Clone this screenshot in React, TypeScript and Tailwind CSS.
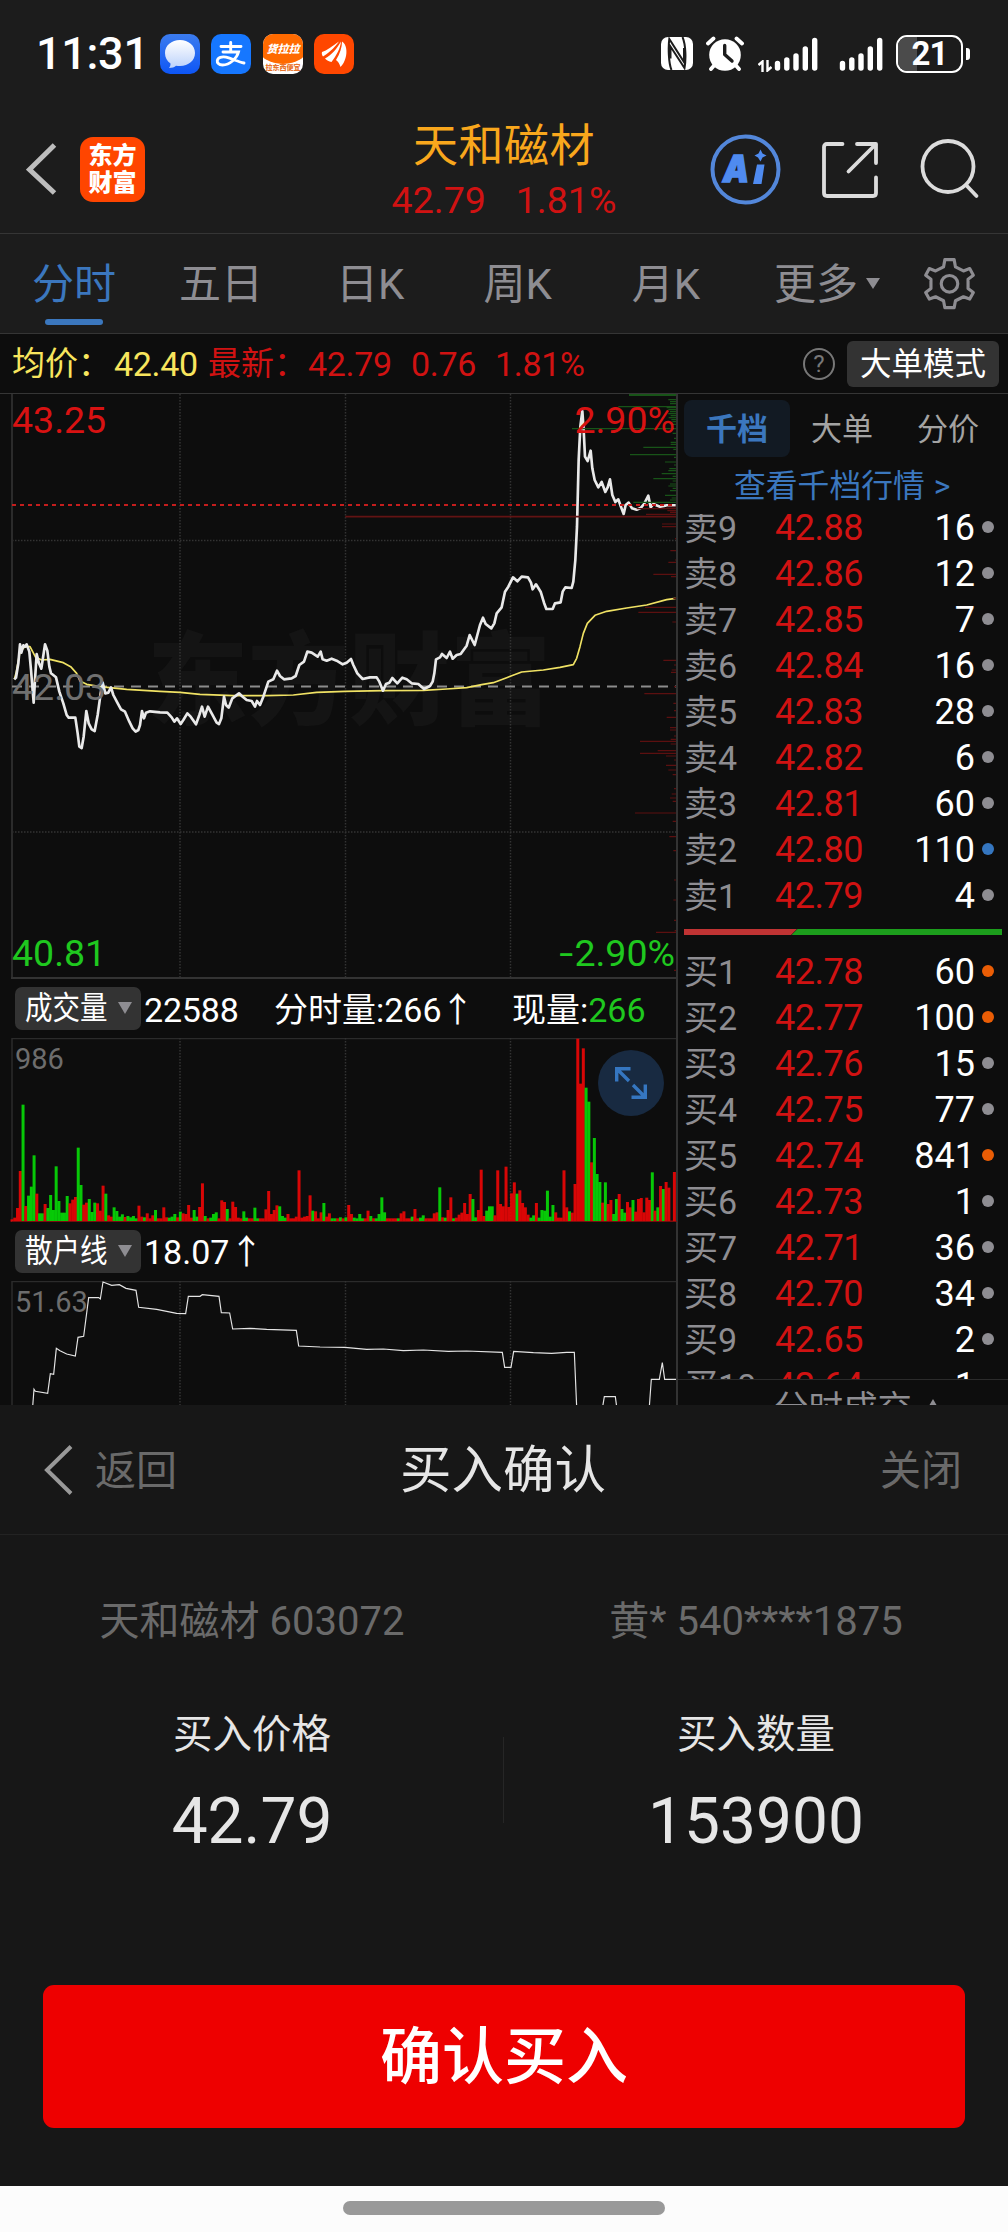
import React from "react";

type Dot = "gray" | "blue" | "orange";
type Quote = [label: string, price: string, qty: string, dot: Dot];

const asks: Quote[] = [
  ["卖9", "42.88", "16", "gray"],
  ["卖8", "42.86", "12", "gray"],
  ["卖7", "42.85", "7", "gray"],
  ["卖6", "42.84", "16", "gray"],
  ["卖5", "42.83", "28", "gray"],
  ["卖4", "42.82", "6", "gray"],
  ["卖3", "42.81", "60", "gray"],
  ["卖2", "42.80", "110", "blue"],
  ["卖1", "42.79", "4", "gray"],
];

const bids: Quote[] = [
  ["买1", "42.78", "60", "orange"],
  ["买2", "42.77", "100", "orange"],
  ["买3", "42.76", "15", "gray"],
  ["买4", "42.75", "77", "gray"],
  ["买5", "42.74", "841", "orange"],
  ["买6", "42.73", "1", "gray"],
  ["买7", "42.71", "36", "gray"],
  ["买8", "42.70", "34", "gray"],
  ["买9", "42.65", "2", "gray"],
  ["买10", "42.64", "1", "gray"],
];

const dotClass: Record<Dot, string> = {
  gray: "bg-[#8e8d92]",
  blue: "bg-[#3576c0]",
  orange: "bg-[#ea5d05]",
};

/* Chart series are kept at three units per pixel and scaled down when drawn. */
const PRICE =
  "43,898 48,893 55,850 60,793 64,818 70,796 75,800 80,793 88,815 93,870 101,968 105,900 110,822 117,850 124,866 128,840 135,793 142,812 148,860 153,880 168,892 178,935 190,970 200,1005 206,1013 226,1013 233,1060 238,1100 245,1104 251,1070 259,993 266,1030 275,1048 284,1053 293,1005 302,940 308,908 316,940 325,938 333,922 340,945 352,968 363,988 375,995 388,1025 398,1045 407,1055 415,1050 420,1035 426,993 432,1015 438,998 450,994 480,997 502,998 515,1012 523,1025 531,1015 542,1032 550,1020 562,1000 572,1010 588,1033 598,1005 606,980 614,1010 624,980 635,1000 650,1028 657,1032 664,1015 672,950 678,975 686,983 697,955 717,940 728,950 740,960 755,963 765,980 771,963 780,975 790,950 805,905 820,898 831,872 840,888 852,898 875,895 887,888 898,855 912,845 922,815 935,818 953,830 962,815 968,838 980,842 995,836 1010,842 1028,853 1040,848 1053,837 1060,855 1072,880 1088,897 1110,892 1130,892 1138,905 1149,932 1158,912 1168,908 1177,894 1192,910 1207,893 1220,898 1235,910 1255,912 1272,927 1290,918 1298,905 1303,880 1308,838 1320,832 1326,822 1340,834 1350,815 1358,836 1370,825 1382,822 1400,797 1409,765 1424,795 1432,765 1440,735 1449,713 1457,732 1474,745 1483,730 1490,700 1505,682 1515,635 1525,620 1539,592 1552,604 1565,590 1584,592 1593,608 1598,628 1608,613 1622,635 1632,668 1639,687 1658,687 1665,670 1682,667 1688,635 1696,622 1715,624 1720,605 1726,540 1731,440 1736,240 1741,140 1747,93 1751,150 1755,230 1763,243 1772,212 1777,265 1784,300 1795,322 1805,306 1816,336 1823,322 1830,298 1837,345 1846,366 1855,358 1862,378 1871,402 1877,375 1886,368 1896,385 1910,389 1923,383 1932,372 1945,347 1952,382 1960,372 1980,380 2000,376 2027,376";

const AVERAGE =
  "43,898 48,880 60,815 75,800 90,800 98,815 107,832 125,840 150,838 190,848 212,860 230,880 240,903 260,913 300,920 380,928 480,934 540,937 600,943 700,947 800,947 880,945 950,937 1035,934 1150,932 1270,931 1340,927 1400,923 1445,914 1480,908 1520,893 1565,876 1630,870 1680,862 1720,854 1730,835 1740,800 1750,760 1762,730 1785,706 1820,694 1880,684 1940,675 2000,659 2027,655";

const RETAIL =
  "98,1520 102,1468 106,1474 143,1480 151,1421 161,1423 169,1345 180,1352 200,1362 226,1368 234,1312 251,1309 266,1193 296,1193 301,1197 309,1146 335,1156 358,1154 378,1165 408,1171 416,1222 470,1228 530,1240 557,1241 565,1189 600,1189 607,1184 657,1189 664,1238 689,1239 698,1287 750,1285 800,1288 889,1291 896,1338 960,1341 1035,1342 1100,1348 1150,1347 1210,1352 1270,1350 1345,1354 1400,1353 1507,1357 1514,1402 1533,1402 1541,1354 1600,1358 1655,1360 1700,1357 1723,1357 1730,1520 1808,1520 1813,1490 1846,1490 1850,1520 1948,1520 1954,1438 1978,1438 1987,1388 1994,1438 2028,1438";

/* One token per minute: direction and the y of the bar's top. */
const VOLUME =
  "r958 r953 r924 r813 g614 r918 g887 g860 g766 r881 g940 g940 r912 g924 g885 g930 g799 g903 g938 g938 g888 r910 r899 r891 g743 g855 r914 r908 g897 g936 g908 r910 r932 r857 g881 r946 r950 g922 g933 g950 g943 r951 g948 g952 g948 g955 r917 r950 g952 r940 r955 r946 g930 r955 r955 r922 r952 g953 g950 g942 r952 g935 r940 r942 r915 r953 g930 g950 r921 r850 g948 r955 g953 g942 g937 r955 r901 r906 g927 r955 r905 r921 r953 r955 g934 g953 r955 r955 g923 g955 r955 r955 r928 r873 r942 r930 r916 g919 g948 g953 r942 r955 r955 r950 r811 r953 r950 r948 r886 g932 r934 r955 r937 g909 r950 r940 g955 g955 r955 g952 r955 g952 r915 r942 g953 g955 g942 g955 r955 r932 g948 r955 g955 g942 g892 g937 r955 r955 r955 r955 g955 r940 r934 r955 r955 g950 r927 r955 g953 g946 r955 r955 r955 r940 r937 g862 r952 g953 r930 r892 g955 r953 r944 r938 r909 r942 r882 g897 g952 r930 r809 r948 g932 g919 g919 r946 r811 r912 r919 r800 r921 r880 r847 g881 r871 r909 r922 r944 g953 g946 r909 g953 g930 g932 g872 g950 g915 r937 r953 r953 r811 r922 g934 r938 r852 r416 r551 r445 g563 g605 r787 g714 g822 g846 r908 g847 r912 r900 g942 g897 r882 g927 g938 r906 r922 g900 r935 r897 r894 r937 r893 r900 g817 r932 g922 r858 g867 r846 r863 r962 r816"
    .split(" ")
    .map((t) => ({ up: t[0] === "r", top: Number(t.slice(1)) }));

/* Pending-order depth at the right edge: [y, start x]. */
const DEPTH_ASK: [number, number][] = [
  [43, 1887], [46, 1887], [59, 2005], [65, 2010], [71, 2010], [80, 1855], [83, 2000], [89, 2005], [95, 2010], [101, 2005], [107, 2012], [113, 2006], [119, 2014], [125, 2017], [133, 2012], [146, 1716], [160, 2018], [175, 2022], [187, 2012], [193, 2012], [202, 1930], [208, 2020], [224, 1890], [232, 2022], [246, 1995], [255, 2022], [266, 2008], [272, 2005], [281, 1985], [289, 2018], [296, 1960], [303, 2018], [312, 2010], [318, 2005], [325, 2018], [332, 2010], [346, 1995], [354, 2015], [360, 2010], [367, 1900],
];
const DEPTH_BID: [number, number][] = [
  [381, 2000], [386, 1910], [392, 2002], [397, 2010], [403, 1938], [432, 1986], [440, 1986], [476, 2025], [512, 2011], [540, 2025], [547, 2005], [583, 1960], [590, 2013], [655, 2020], [682, 1935], [697, 1915], [726, 2017], [841, 1990], [855, 2022], [870, 2015], [877, 2013], [920, 2022], [941, 1933], [970, 2020], [992, 2022], [1012, 2000], [1043, 2010], [1050, 2010], [1068, 2022], [1078, 2012], [1084, 1920], [1092, 2012], [1112, 1973], [1120, 1920], [1128, 1998], [1140, 2022], [1156, 1998], [1170, 2005], [1184, 2018], [1226, 2022], [1242, 2015], [1254, 2010], [1264, 2018], [1299, 1905], [1324, 2018], [1370, 2008], [1412, 2020], [1500, 2022], [1560, 2020], [1621, 2022], [1652, 2024], [1657, 1968], [1771, 2022],
];

function Grid({ height }: { height: number }) {
  return (
    <g stroke="#333" strokeWidth="1.5" strokeDasharray="1.5 1.5">
      {[180, 345.5, 510.5].map((x) => (
        <line key={x} x1={x} x2={x} y1="0" y2={height} />
      ))}
    </g>
  );
}

function Signal() {
  return (
    <svg width="45" height="36" viewBox="0 0 45 36" stroke="#fff" strokeWidth="5.4" strokeLinecap="round">
      <path d="M3.5 27.5V32M12.8 24V32M22 20V32M31.3 13V32M40.7 4.5V32" />
    </svg>
  );
}

function StatusBar() {
  return (
    <div className="flex h-[107px] items-center pl-[36px] pr-[38px] text-white">
      <span className="w-[124px] whitespace-nowrap text-[45px] font-medium leading-none tracking-[-0.3px]">11:31</span>
      <div className="flex h-[40px] w-[40px] items-center justify-center rounded-[10px] bg-gradient-to-b from-[#3b7bee] to-[#0d55f5]">
        <svg width="40" height="40" viewBox="0 0 40 40">
          <defs>
            <linearGradient id="bubble" x1="0" y1="0" x2="0" y2="1">
              <stop offset="0" stopColor="#fff" />
              <stop offset="1" stopColor="#bcd2fb" />
            </linearGradient>
          </defs>
          <path d="M20 6C11.500 6 5 11.500 5 19C5 23.500 7 27 10.500 29.500C10.500 31.500 10 32.800 9 34C12 34 14.500 33 16 31.700C17.300 32 18.700 32 20 32C28.500 32 35 26.500 35 19C35 11.500 28.500 6 20 6Z" fill="url(#bubble)" />
        </svg>
      </div>
      <div className="ml-[11px] h-[40px] w-[40px] rounded-[10px] bg-[#1677ff]">
        <svg width="40" height="40" viewBox="0 0 40 40" fill="none" stroke="#fff" strokeWidth="2.900" strokeLinecap="round">
          <path d="M10 12.500H30M19.700 8.500V18M12 18H27.500C26 24 19 31 11.500 31C7.500 31 6 28.600 6.300 26.600C6.800 23.500 11 22.300 15 23.200C21 24.600 27 27.800 33 29" />
        </svg>
      </div>
      <div className="ml-[12px] flex h-[40px] w-[40px] flex-col items-center overflow-hidden rounded-[10px] bg-white">
        <div className="flex h-[30px] w-[48px] shrink-0 items-center justify-center rounded-b-[50%] bg-[#ff6a00] text-[11px] font-black italic leading-none">
          <span className="pt-[2px]">货拉拉</span>
        </div>
        <span className="whitespace-nowrap text-[7px] font-black leading-[8px] text-[#e8732a]">拉东西便宜</span>
      </div>
      <div className="ml-[11px] h-[40px] w-[40px] rounded-[10px] bg-[#ff4700]">
        <svg width="40" height="40" viewBox="0 0 40 40" fill="#fff">
          <path d="M8 18C13 16.500 18 12.500 25 7.500C21.500 12 17.500 17 9 22.500C8 21 7.500 19.500 8 18Z" />
          <path d="M11 24.500C18 20.500 23 14.500 27 7.500C26.500 14 22.500 21.500 17.500 28C15 27.500 12.500 26.500 11 24.500Z" />
          <path d="M22 26C26 19.500 28 13.500 28 7.500C32.500 10 33.500 18 31.500 24C30.500 27.500 29 30.500 26.500 33C25.500 29.500 24 27.500 22 26Z" />
        </svg>
      </div>
      <div className="ml-auto flex items-center">
        <svg width="32" height="33" viewBox="0 0 32 33">
          <rect width="32" height="33" rx="7" fill="#fff" />
          <path d="M10.500 33C7.500 26 7.200 10 8.300 2L23 25V11M21.500 0C25 8 25 23 23.500 31L9.500 9.500V21.500" stroke="#1c1c1c" strokeWidth="2" fill="none" />
        </svg>
        <svg className="ml-[13px]" width="38" height="35" viewBox="0 0 38 35">
          <circle cx="19" cy="19" r="15.800" fill="#fff" />
          <path d="M2 7.500L7.500 2.500M36 7.500L30.500 2.500M5 33L8.500 29M33 33L29.500 29" stroke="#fff" strokeWidth="3.800" strokeLinecap="round" />
          <path d="M18.700 9.500V18.500L26 25" stroke="#1c1c1c" strokeWidth="3.400" fill="none" strokeLinecap="round" strokeLinejoin="round" />
        </svg>
        <svg className="ml-[14px] mt-[24px]" width="14" height="12" viewBox="0 0 14 12" fill="none" stroke="#fff" strokeWidth="2.400">
          <path d="M0.500 5L4.500 1.500V12M13.500 7L9.500 10.500V0" />
        </svg>
        <div className="ml-[2px]"><Signal /></div>
        <div className="ml-[20px]"><Signal /></div>
        <div className="relative ml-[12px] flex h-[38px] w-[67px] items-center justify-center overflow-hidden rounded-[11px] border-2 border-white">
          <div className="absolute inset-y-0 left-0 w-[19px] bg-[#4b4b4b]" />
          <span className="relative text-[33px] font-bold leading-none tracking-[-1px]">21</span>
        </div>
        <div className="ml-[3px] h-[12px] w-[4px] rounded-r-[3px] bg-white" />
      </div>
    </div>
  );
}

function Header() {
  return (
    <header className="flex h-[127px] items-start border-b border-[#353535] pl-[26px] pr-[28px]">
      <svg className="mt-[36px]" width="32" height="52" viewBox="0 0 32 52" fill="none" stroke="#bdbdbd" strokeWidth="5">
        <path d="M28.500 2L3.500 26.500L28.500 50" />
      </svg>
      <div className="ml-[22px] mt-[30px] flex h-[65px] w-[65px] flex-col items-center justify-center rounded-[13px] bg-[#ff4500] text-[24px] font-black leading-[27px] text-white">
        <span>东方</span>
        <span>财富</span>
      </div>
      <div className="ml-[245px] flex w-[228px] flex-col items-center">
        <span className="mt-[17px] text-[45px] leading-none tracking-[0.500px] text-[#f9a71c]">天和磁材</span>
        <span className="mt-[13px] flex gap-[30px] text-[37.500px] leading-none text-[#d01212]">
          <span>42.79</span>
          <span>1.81%</span>
        </span>
      </div>
      <svg className="ml-[92px] mt-[27px]" width="71" height="71" viewBox="0 0 71 71">
        <circle cx="35.500" cy="35.500" r="33" fill="none" stroke="#5387da" strokeWidth="4" />
        <text x="13" y="48" fill="#4f8bf0" stroke="#4f8bf0" strokeWidth="1.500" fontFamily="Inter, sans-serif" fontSize="37" fontWeight="900" fontStyle="italic" textLength="26" lengthAdjust="spacingAndGlyphs">A</text>
        <path d="M47 30.500H54.500L51.500 50H43ZM50.500 15.500L52.500 19.500L56.500 21.500L52.500 23.500L50.500 27.500L48 23.500L44.500 21.500L48.500 19.500Z" fill="#4f8bf0" />
      </svg>
      <svg className="ml-[40px] mt-[34px]" width="58" height="58" viewBox="0 0 58 58" fill="none" stroke="#dcdcdc" strokeWidth="3.800" strokeLinecap="round" strokeLinejoin="round">
        <path d="M21.500 3H6Q3 3 3 6V52Q3 55 6 55H52Q55 55 55 52V36.500M36 3H55V22M54 4L27.500 30.500" />
      </svg>
      <svg className="ml-[41px] mt-[32px]" width="60" height="60" viewBox="0 0 60 60" fill="none" stroke="#dcdcdc" strokeWidth="3.800" strokeLinecap="round">
        <circle cx="28" cy="27.500" r="25.500" />
        <path d="M46 46L56.500 57" />
      </svg>
    </header>
  );
}

function Tabs() {
  return (
    <nav className="flex h-[100px] items-start border-b border-[#353535] pl-[32px] text-[42px] leading-none text-[#8e8d92]">
      <div className="flex w-[84px] flex-col items-center pt-[30px] text-[#3b77be]">
        <span>分时</span>
        <span className="mt-[13px] h-[6px] w-[58px] rounded-full bg-[#3b77be]" />
      </div>
      <span className="ml-[63px] mt-[30px]">五日</span>
      <span className="ml-[73px] mt-[30px]">日K</span>
      <span className="ml-[79px] mt-[30px]">周K</span>
      <span className="ml-[80px] mt-[30px]">月K</span>
      <span className="ml-[74px] mt-[30px]">更多</span>
      <svg className="ml-[8px] mt-[44px]" width="14" height="11" viewBox="0 0 14 11" fill="#8e8d92">
        <path d="M0 0H14L7 11Z" />
      </svg>
      <svg className="ml-[43px] mt-[23px]" width="53" height="53" viewBox="0 0 160 160" fill="none" stroke="#8e8d92" strokeWidth="9.500" strokeLinejoin="round">
        <path d="M66 8H94L98 30L122 42L141 35L152 55L136 67V95L152 107L141 127L122 120L98 132L94 153H66L62 132L38 120L19 127L8 107L24 95V67L8 55L19 35L38 42L62 30Z" />
        <circle cx="80" cy="81" r="25" />
      </svg>
    </nav>
  );
}

function InfoBar() {
  return (
    <div className="flex h-[60px] items-center border-b border-[#353535] bg-[#0d0d0d] pl-[12px] pr-[9px] text-[33px] leading-none">
      <span className="w-[102px] whitespace-nowrap text-[#f8e55d]">均价：</span>
      <span className="w-[94px] text-[34px] tracking-[-0.300px] text-[#f8e55d]">42.40</span>
      <span className="w-[100px] whitespace-nowrap text-[#d01212]">最新：</span>
      <span className="w-[103px] text-[34px] tracking-[-0.300px] text-[#d01212]">42.79</span>
      <span className="w-[84px] text-[34px] tracking-[-0.300px] text-[#d01212]">0.76</span>
      <span className="text-[34px] tracking-[-0.300px] text-[#d01212]">1.81%</span>
      <span className="ml-auto flex h-[32px] w-[32px] items-center justify-center rounded-full border-2 border-[#777] text-[24px] text-[#777]">?</span>
      <span className="ml-[12px] flex h-[46px] w-[152px] items-center justify-center rounded-[6px] bg-[#333] pt-[2px] text-[31.500px] text-white">大单模式</span>
    </div>
  );
}

function PricePanel() {
  return (
    <div className="relative h-[586px] text-[37.500px] leading-none">
      <div className="absolute left-[147px] top-[238px] text-[101px] font-black text-[#141414]">东方财富</div>
      <svg className="absolute inset-0" width="676" height="586" viewBox="0 0 676 586" fill="none">
        <Grid height={584} />
        <g stroke="#333" strokeWidth="1.500" strokeDasharray="1.500 1.500">
          <line x1="12" x2="676" y1="146.500" y2="146.500" />
          <line x1="12" x2="676" y1="438" y2="438" />
        </g>
        <path d="M12 0V585" stroke="#2b2b2b" strokeWidth="2" />
        <path d="M11 584H676" stroke="#333" strokeWidth="2" />
        <path d="M12 292.500H676" stroke="#8c8c8c" strokeWidth="2" strokeDasharray="10 7" />
        <g transform="translate(0 -14) scale(0.33333)">
          <polyline points={AVERAGE} stroke="#f0e264" strokeWidth="5" strokeLinejoin="round" />
          <polyline points={PRICE} stroke="#e9e9e9" strokeWidth="8" strokeLinejoin="round" />
          <path d={DEPTH_ASK.map(([y, x]) => `M${x} ${y}H2028`).join("")} stroke="#185418" strokeWidth="3.500" />
          <path d={DEPTH_BID.map(([y, x]) => `M${x} ${y}H2028`).join("")} stroke="#5c1010" strokeWidth="3.500" />
          <path d="M1036 410H2028" stroke="#631313" strokeWidth="5" />
        </g>
        <path d="M12 111H676" stroke="#c41d1d" strokeWidth="2" strokeDasharray="4 4" />
      </svg>
      <span className="absolute left-[12px] top-[8px] text-[#d81212]">43.25</span>
      <span className="absolute right-[1px] top-[8px] text-[#d81212]">2.90%</span>
      <span className="absolute left-[12px] top-[275px] text-[#707070]">42.03</span>
      <span className="absolute left-[12px] top-[541px] text-[#1fc81f]">40.81</span>
      <span className="absolute right-[1px] top-[541px] text-[#1fc81f]"><span className="mr-[1px] inline-block origin-right scale-x-[1.350]">-</span>2.90%</span>
    </div>
  );
}

function IndicatorPill({ label }: { label: string }) {
  return (
    <div className="flex h-[43px] w-[126px] items-center rounded-[7px] bg-[#333] pl-[10px]">
      <span className="w-[83px] origin-left scale-x-[0.860] whitespace-nowrap text-[32px]">{label}</span>
      <svg className="ml-[10px]" width="14" height="12" viewBox="0 0 14 12" fill="#8e8d92">
        <path d="M0 0H14L7 12Z" />
      </svg>
    </div>
  );
}

function VolumePanel() {
  return (
    <>
      <div className="flex h-[58px] items-center pl-[15px] text-[34px] leading-none text-white">
        <div className="-mt-[2px]"><IndicatorPill label="成交量" /></div>
        <span className="ml-[3px] w-[130px] pt-[2px] tracking-[-0.200px]">22588</span>
        <span className="w-[238px] whitespace-nowrap pt-[2px]">分时量:266<span className="-ml-[1px]">↑</span></span>
        <span className="whitespace-nowrap pt-[2px]">现量:<span className="text-[#1fc81f]">266</span></span>
      </div>
      <div className="relative h-[185px]">
        <svg className="absolute inset-0" width="678" height="185" viewBox="0 0 678 185" fill="none">
          <path d="M12 184V0.500H676" stroke="#2b2b2b" strokeWidth="1.500" />
          <Grid height={183} />
          <g transform="translate(0 -138) scale(0.33333)">
            {VOLUME.map((v, i) => (
              <rect key={i} x={31.500 + i * 8.280} y={v.top} width="9" height={965 - v.top} fill={v.up ? "#ee0505" : "#07dd07"} fillOpacity="0.900" />
            ))}
          </g>
          <path d="M12 183.500H677" stroke="#7a0d0d" strokeWidth="1" />
        </svg>
        <span className="absolute left-[15px] top-[7px] text-[29px] leading-none text-[#6d6d6d]">986</span>
        <div className="absolute left-[598px] top-[12px] flex h-[66px] w-[66px] items-center justify-center rounded-full bg-[#182a41]">
          <svg width="34" height="34" viewBox="0 0 34 34" fill="none" stroke="#3576c0" strokeWidth="3.400">
            <path d="M2.700 15.500V2.700H16.500M3.500 3.500L15 15M31.300 18.500V31.300H17.500M30.500 30.500L19 19" />
          </svg>
        </div>
      </div>
    </>
  );
}

function RetailPanel() {
  return (
    <>
      <div className="flex h-[58px] items-center pl-[15px] text-[34px] leading-none text-white">
        <div className="-mt-[2px]"><IndicatorPill label="散户线" /></div>
        <span className="ml-[3px]">18.07↑</span>
      </div>
      <div className="relative h-[124px]">
        <svg className="absolute inset-0" width="676" height="124" viewBox="0 0 676 124" fill="none">
          <path d="M12 124V0.500H676" stroke="#2b2b2b" strokeWidth="1.500" />
          <Grid height={124} />
          <g transform="translate(0 -381) scale(0.33333)">
            <polyline points={RETAIL} stroke="#e4e4e4" strokeWidth="3.500" />
          </g>
        </svg>
        <span className="absolute left-[15px] top-[7px] text-[29px] leading-none text-[#6d6d6d]">51.63</span>
      </div>
    </>
  );
}

function QuoteRow({ quote: [label, price, qty, dot] }: { quote: Quote }) {
  return (
    <div className="flex h-[46px] shrink-0 items-center pl-[6px] pr-[14px] leading-none">
      <span className="w-[91px] whitespace-nowrap text-[34px] text-[#8e8d92]">{label}</span>
      <span className="text-[36px] tracking-[-0.500px] text-[#d01212]">{price}</span>
      <span className="ml-auto text-[36px] text-white">{qty}</span>
      <span className={`mb-[3px] ml-[7px] h-[12px] w-[12px] rounded-full ${dotClass[dot]}`} />
    </div>
  );
}

function OrderBook() {
  return (
    <aside className="flex h-[1011px] w-[330px] flex-col">
      <div className="flex h-[66px] items-start pl-[6px] pt-[6px] text-[31px] leading-none text-[#a3a3a3]">
        <span className="flex h-[57px] w-[106px] items-center justify-center rounded-[8px] bg-[#121a23] pt-[2px] font-bold text-[#3b77be]">千档</span>
        <span className="ml-[21px] mt-[14px]">大单</span>
        <span className="ml-[44px] mt-[14px]">分价</span>
      </div>
      <div className="flex h-[54px] items-start pl-[56px] pt-[11px] text-[31.800px] leading-none text-[#3b77be]">
        <span className="whitespace-pre">查看千档行情</span>
        <span className="ml-[9px]">&gt;</span>
      </div>
      <div className="flex h-[866px] flex-col overflow-hidden border-b border-[#2b2b2b]">
        <div className="-mt-[9px] shrink-0">
          {asks.map((q) => <QuoteRow key={q[0]} quote={q} />)}
        </div>
        <div className="h-[30px] shrink-0 pl-[6px] pr-[6px] pt-[10px]">
          <svg width="318" height="6" viewBox="0 0 318 6">
            <path d="M0 0H113L107 6H0Z" fill="#c03333" />
            <path d="M113.500 0H318V6H107.500Z" fill="#1c9d1c" />
          </svg>
        </div>
        <div className="shrink-0">
          {bids.map((q) => <QuoteRow key={q[0]} quote={q} />)}
        </div>
      </div>
      <div className="flex h-[25px] items-start overflow-hidden pl-[96px] text-[34.500px] leading-none text-[#8e8d92]">
        <span className="mt-[11px]">分时成交</span>
        <svg className="ml-[14px] mt-[19px]" width="14" height="12" viewBox="0 0 14 12" fill="#8e8d92">
          <path d="M7 0L14 12H0Z" />
        </svg>
      </div>
    </aside>
  );
}

function ConfirmSheet() {
  return (
    <section className="h-[781px] bg-[#171717]">
      <div className="flex h-[130px] items-center border-b border-[#232323] pl-[43px] pr-[46px] text-[41px] leading-none text-[#6a6a6a]">
        <svg width="31" height="50" viewBox="0 0 31 50" fill="none" stroke="#999" strokeWidth="4">
          <path d="M28 1.500L4 25L28 48.500" />
        </svg>
        <span className="ml-[21px] w-[305px] pt-[3px]">返回</span>
        <span className="w-[206px] whitespace-nowrap pt-[3px] text-[51.500px] text-[#e6e6e6]">买入确认</span>
        <span className="ml-auto pt-[3px]">关闭</span>
      </div>
      <div className="grid grid-cols-2 pt-[67px] text-center text-[40px] leading-none text-[#6a6a6a]">
        <span>天和磁材 603072</span>
        <span>黄* 540****1875</span>
      </div>
      <div className="relative grid grid-cols-2 pt-[73px] text-center leading-none text-[#e6e6e6]">
        <div>
          <div className="text-[39.500px]">买入价格</div>
          <div className="mt-[35px] text-[64px]">42.79</div>
        </div>
        <div>
          <div className="text-[39.500px]">买入数量</div>
          <div className="mt-[35px] text-[64px]">153900</div>
        </div>
        <div className="absolute left-[503px] top-[95px] h-[86px] w-px bg-[#262626]" />
      </div>
      <button className="ml-[43px] mt-[131px] flex h-[143px] w-[922px] items-center justify-center rounded-[11px] bg-[#ee0000] pt-[4px] text-[62px] font-medium leading-none text-white">
        确认买入
      </button>
    </section>
  );
}

export default function App() {
  return (
    <div className="h-[2232px] w-[1008px] overflow-hidden bg-[#1c1c1c] font-[Roboto,'Noto_Sans_CJK_SC',sans-serif]" lang="zh-CN">
      <StatusBar />
      <Header />
      <Tabs />
      <InfoBar />
      <main className="flex h-[1011px] overflow-hidden bg-[#0d0d0d]">
        <div className="w-[678px] shrink-0 border-r-2 border-[#333]">
          <PricePanel />
          <VolumePanel />
          <RetailPanel />
        </div>
        <OrderBook />
      </main>
      <ConfirmSheet />
      <footer className="flex h-[46px] justify-center bg-[#fcfcfc] pt-[15px]">
        <div className="h-[14px] w-[322px] rounded-full bg-[#999]" />
      </footer>
    </div>
  );
}
